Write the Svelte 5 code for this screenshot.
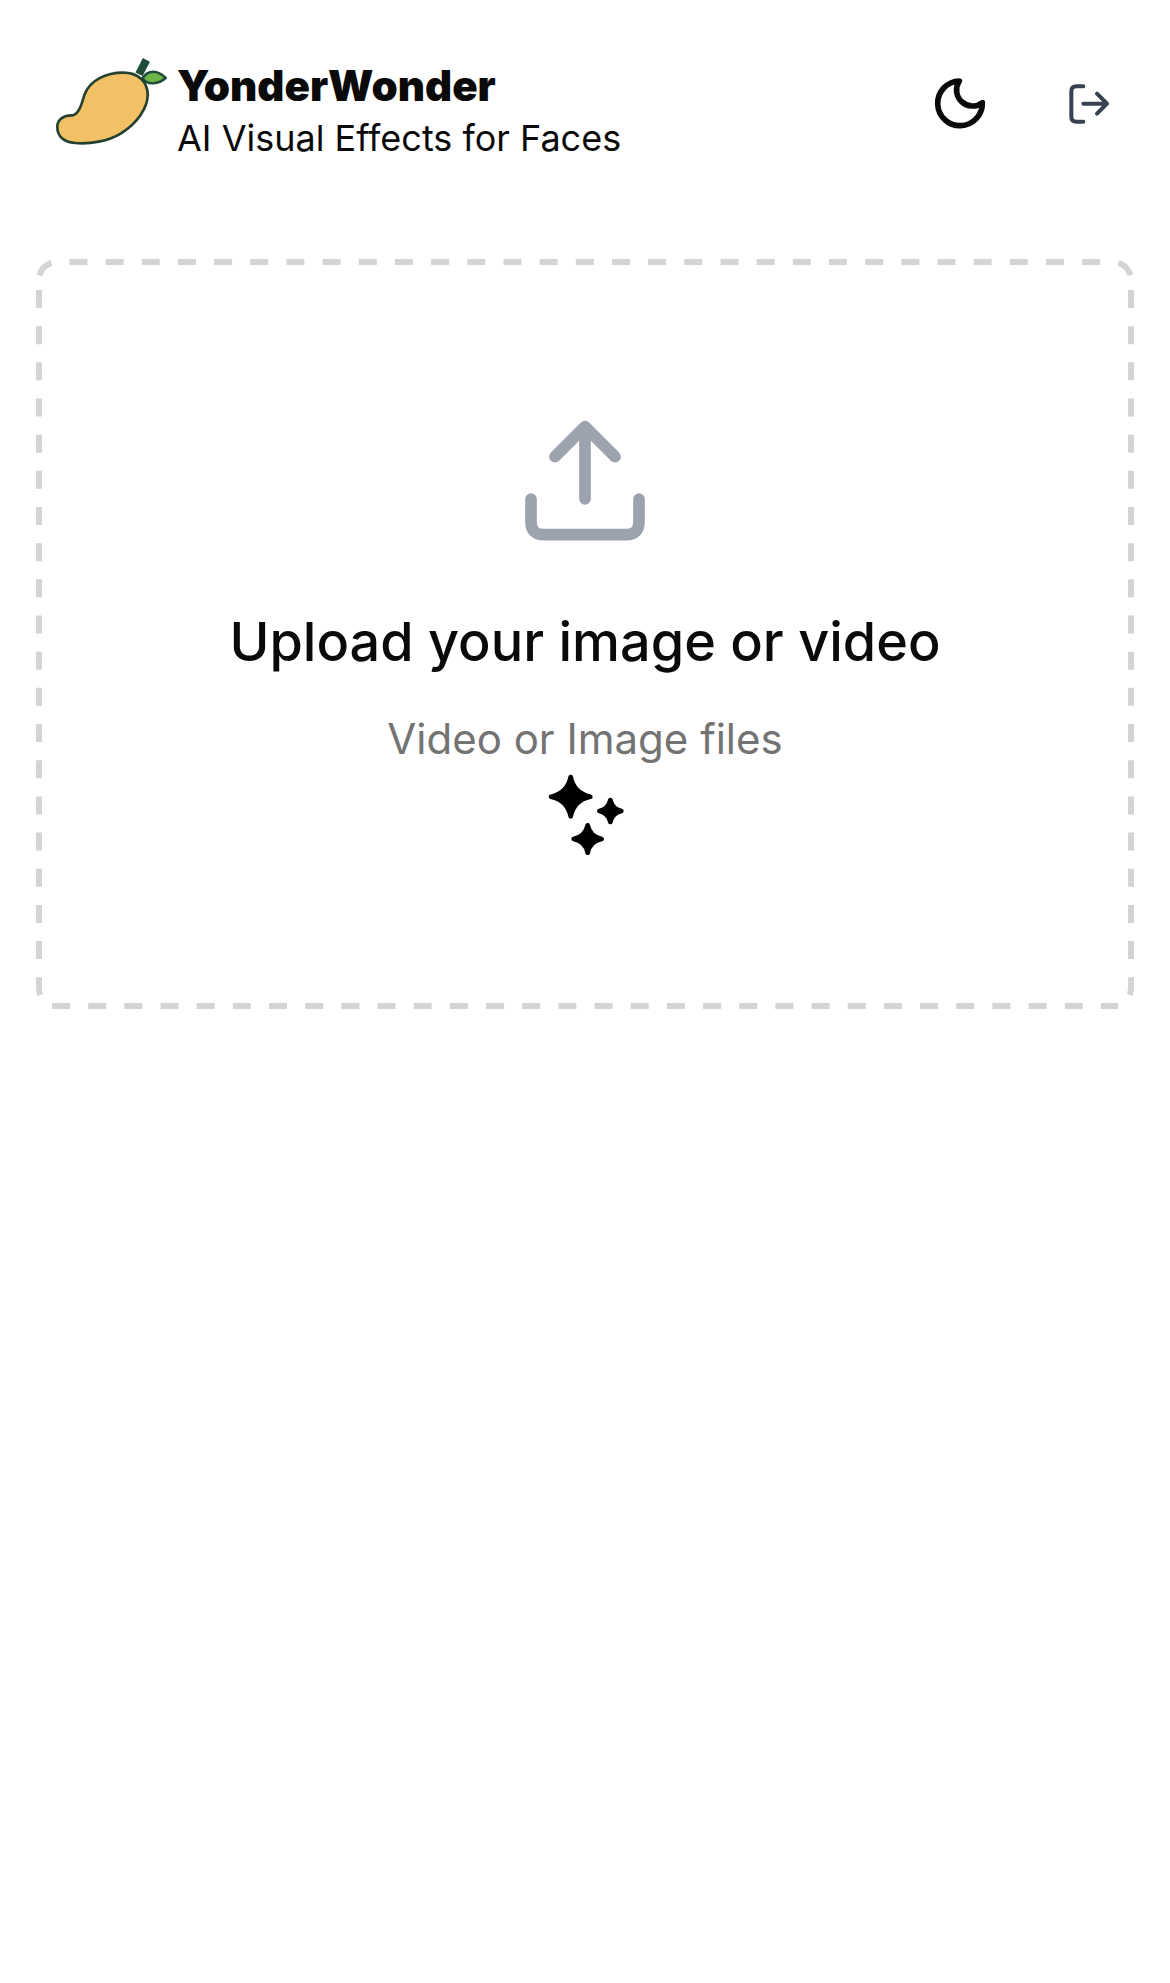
<script>
	let title = "Upload your image or video";
	let hint = "Video or Image files";
</script>

<div class="page">
	<header class="top">
		<div class="brand">
			<svg class="logo" viewBox="0 0 400 340" aria-hidden="true">
				<path d="M320 60 L298 103" stroke="#1f4d3a" stroke-width="24" fill="none" />
				<path d="M308 116 C325 88 354 90 378 114 C358 132 325 138 308 116 Z" fill="#6fb54a" stroke="#1f4d3a" stroke-width="8" stroke-linejoin="round" />
				<path d="M52 262 C52 238 72 226 98 227 C118 222 124 195 134 164 C150 120 200 98 250 98 C295 98 324 125 324 165 C324 205 292 250 245 280 C205 305 150 314 105 310 C72 307 52 290 52 262 Z" fill="#f2c166" stroke="#24402f" stroke-width="8" />
			</svg>
			<div class="names">
				<div class="name">YonderWonder</div>
				<div class="tagline">AI Visual Effects for Faces</div>
			</div>
		</div>
		<div class="actions">
			<button class="iconbtn moon" aria-label="Toggle theme">
				<svg viewBox="90 39 180 180" width="60" height="60" fill="none" stroke="#0a0a0a" stroke-width="17" stroke-linecap="round" stroke-linejoin="round">
					<path d="M178 63 A67 67 0 1 0 247 128 A48 48 0 0 1 178 63 Z" />
				</svg>
			</button>
			<button class="iconbtn logout" aria-label="Log out">
				<svg viewBox="500 60 135 135" width="45" height="45" fill="none" stroke="#374151" stroke-width="12" stroke-linecap="round" stroke-linejoin="round">
					<path d="M549 76 H528 Q513 76 513 91 V167 Q513 182 528 182 H549" />
					<path d="M549 128 H620 M590 98 L620 128 L590 158" />
				</svg>
			</button>
		</div>
	</header>

	<section class="drop">
		<svg class="dashes" viewBox="0 0 1098 750" aria-hidden="true">
			<path d="M3.5 16.6 A18 18 0 0 1 21 3 H1077 A18 18 0 0 1 1094.5 16.6" />
			<path d="M1095 31 V729 A18 18 0 0 1 1093.6 736" />
			<path d="M3 31 V729 A18 18 0 0 0 4.4 736" />
			<path d="M16 747 H1082" />
		</svg>
		<svg class="upload" viewBox="0 0 510 510" width="170" height="170" fill="none" stroke="#9ca3af" stroke-width="35" stroke-linecap="round" stroke-linejoin="round">
			<path d="M93 297 V365 Q93 404 132 404 H378 Q417 404 417 365 V297" />
			<path d="M255 297 V80 M165 170 L255 80 L345 170" />
		</svg>
		<h1>{title}</h1>
		<p>{hint}</p>
		<svg class="sparkles" viewBox="0 0 330 330" width="110" height="110" fill="#000" stroke="#000" stroke-width="14" stroke-linejoin="round">
			<path d="M122 51 Q132 100 181 110 Q132 120 122 169 Q112 120 63 110 Q112 100 122 51 Z" />
			<path d="M241 120 Q247 147 274 153 Q247 159 241 186 Q235 159 208 153 Q235 147 241 120 Z" />
			<path d="M173 196 Q180 230 215 237 Q180 244 173 278 Q166 244 131 237 Q166 230 173 196 Z" />
		</svg>
	</section>
</div>

<style>
	:global(body) {
		background: #fff;
		font-family: Inter, "Liberation Sans", sans-serif;
		color: #0a0a0a;
	}
	.page {
		min-height: 1983px;
		box-sizing: border-box;
		padding: 40px 36px 0;
	}
	.top {
		display: flex;
		justify-content: space-between;
		align-items: flex-start;
		height: 219px;
		margin-left: 4px;
	}
	.brand {
		display: flex;
		gap: 4px;
	}
	.logo {
		width: 133px;
		height: 113px;
		flex: none;
	}
	.names {
		padding-top: 20px;
	}
	.name {
		font-size: 42px;
		line-height: 52px;
		font-weight: 900;
	}
	.tagline {
		font-size: 36px;
		line-height: 52px;
	}
	.actions {
		display: flex;
		align-items: center;
		gap: 77px;
		margin-top: 33px;
		margin-right: 22px;
	}
	.iconbtn {
		display: flex;
		padding: 0;
		border: 0;
		background: none;
	}
	.drop {
		position: relative;
		display: flex;
		flex-direction: column;
		align-items: center;
		height: 750px;
		box-sizing: border-box;
		padding-top: 141px;
	}
	.dashes {
		position: absolute;
		inset: 0;
		width: 100%;
		height: 100%;
	}
	.dashes path {
		fill: none;
		stroke: #d4d4d4;
		stroke-width: 6;
		stroke-dasharray: 18 18.17;
	}
	h1 {
		margin: 36px 0 0;
		font-size: 54px;
		line-height: 72px;
		font-weight: 500;
	}
	p {
		margin: 31px 0 0;
		font-size: 42px;
		line-height: 60px;
		color: #737373;
	}
	.sparkles {
		margin-top: -9px;
	}
</style>
